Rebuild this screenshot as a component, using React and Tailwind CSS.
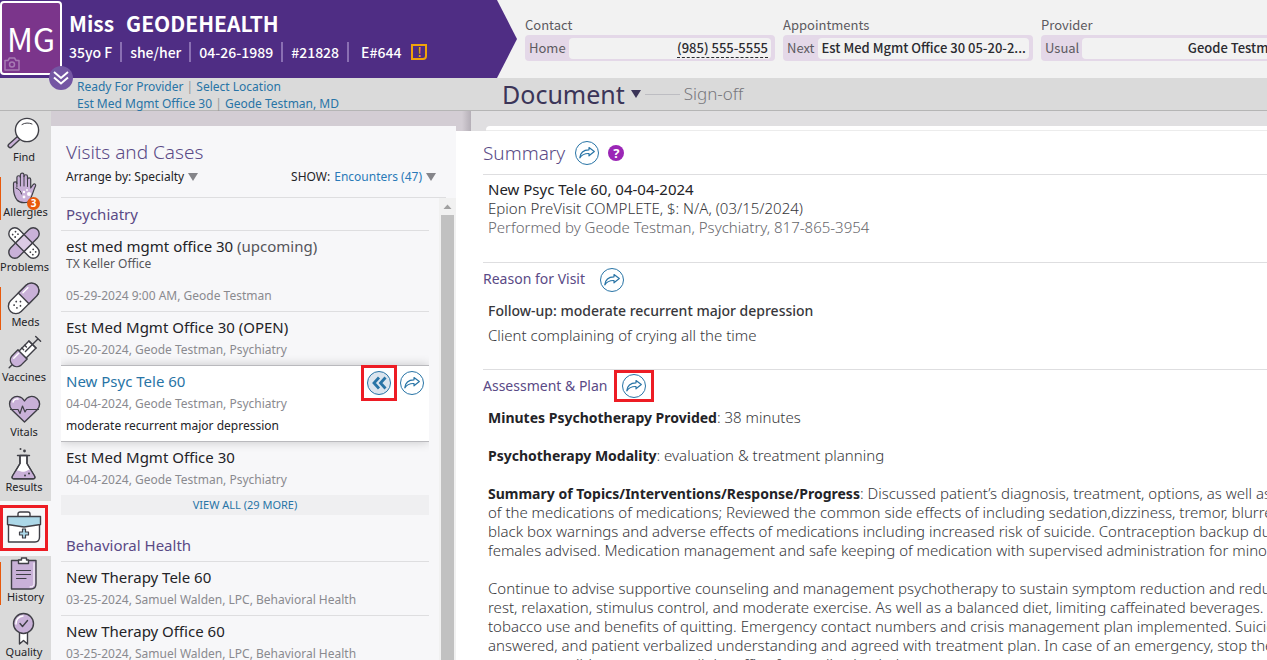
import React from 'react';

const stroke = { stroke: '#3f3f46', strokeWidth: 1.4, strokeLinejoin: 'round', strokeLinecap: 'round' };
const LILAC = '#c9b1d8';

const FindIcon = () => (
  <svg viewBox="0 0 48 34" className="w-12 h-[34px] overflow-visible" {...stroke}>
    <path d="M17.5 20.5 L8.8 28.2 a2 2 0 0 0 2.9 2.9 L20.3 23z" fill={LILAC} />
    <circle cx="27" cy="14" r="11.6" fill="#fff" />
    <path d="M22 8.5 C25 6.6 29 6.6 32 8" fill="none" strokeWidth="1" />
  </svg>
);

const AllergiesIcon = () => (
  <svg viewBox="0 0 48 34" className="w-12 h-[34px] overflow-visible" {...stroke}>
    <path
      d="M17 29 C14 25 13.500 22 13.500 17 V12.500 a1.700 1.700 0 0 1 3.400 0 V6.500 a1.700 1.700 0 0 1 3.500 0 V4 a1.800 1.800 0 0 1 3.600 0 V5.500 a1.700 1.700 0 0 1 3.500 0 V8.500 a1.600 1.600 0 0 1 3.200 0 V17 l2.500 -3.500 c1.500 -1.500 3 0 2.300 1.500 C33 20 32.500 25 29.500 29.500 C28 32.500 20 32.500 17 29z"
      fill={LILAC}
      strokeWidth="1.200"
    />
    <path d="M16.900 12 V16 M20.400 6 V15 M24 5 V15 M27.500 6 V15.500 M16 17 C19 18 21 20 21.500 23" fill="none" strokeWidth="1" />
    <g fill="#fff" stroke="none">
      <circle cx="24" cy="21" r="1.200" />
      <circle cx="29" cy="23" r="2" />
      <circle cx="24" cy="26" r="1.400" />
      <circle cx="27" cy="19" r=".9" />
    </g>
  </svg>
);

const ProblemsIcon = () => (
  <svg viewBox="0 0 48 34" className="w-12 h-[34px] overflow-visible" {...stroke}>
    <g transform="rotate(45 24 17)">
      <rect x="5" y="11" width="38" height="12" rx="6" fill="#fff" />
      <g fill="#3f3f46" stroke="none">
        <circle cx="10" cy="15" r=".9" />
        <circle cx="13.500" cy="15" r=".9" />
        <circle cx="10" cy="19" r=".9" />
        <circle cx="13.500" cy="19" r=".9" />
        <circle cx="35" cy="15" r=".9" />
        <circle cx="38.500" cy="15" r=".9" />
        <circle cx="35" cy="19" r=".9" />
        <circle cx="38.500" cy="19" r=".9" />
      </g>
    </g>
    <g transform="rotate(-45 24 17)">
      <rect x="5" y="11" width="38" height="12" rx="6" fill={LILAC} />
      <rect x="18" y="11" width="12" height="12" fill="#dccbe5" />
    </g>
  </svg>
);

const MedsIcon = () => (
  <svg viewBox="0 0 48 34" className="w-12 h-[34px] overflow-visible" {...stroke}>
    <g transform="rotate(-45 24 17)">
      <rect x="5" y="9.500" width="37" height="15" rx="7.500" fill="#fff" />
      <path d="M23.500 9.500 H34.500 a7.500 7.500 0 0 1 0 15 H23.500z" fill={LILAC} />
      <path d="M27 12.500 H34" stroke="#fff" fill="none" />
      <g fill="#3f3f46" stroke="none">
        <circle cx="12" cy="15" r=".9" />
        <circle cx="16" cy="14" r=".9" />
        <circle cx="12" cy="19" r=".9" />
        <circle cx="16" cy="20" r=".9" />
        <circle cx="19" cy="17" r=".9" />
      </g>
    </g>
  </svg>
);

const VaccinesIcon = () => (
  <svg viewBox="0 0 48 34" className="w-12 h-[34px] overflow-visible" {...stroke}>
    <g transform="rotate(-45 24 17)">
      <path d="M3 17 H9" />
      <path d="M22 10.500 V23.500 H13 C9.500 23 7.500 20 7.500 17 C7.500 14 9.500 11 13 10.500z" fill={LILAC} />
      <rect x="22" y="12" width="14" height="10" fill="#fff" />
      <path d="M26 17 H44 M44 13.500 V20.500 M36 12 V22" fill="none" />
      <path d="M26 12 V14.500 M30 12 V14.500" fill="none" />
      <path d="M13 13.500 H20" stroke="#fff" fill="none" />
    </g>
  </svg>
);

const VitalsIcon = () => (
  <svg viewBox="0 0 48 34" className="w-12 h-[34px] overflow-visible" {...stroke}>
    <path
      d="M24.500 31 L12 19 C8.500 15.500 9 10 12 7.500 C16 4 21.500 5 24.500 10 C27.500 5 33 4 37 7.500 C40.500 10.500 40.500 15.500 37 19z"
      fill={LILAC}
    />
    <path d="M13 11 C13.500 8.500 16 7.500 18 8" stroke="#fff" fill="none" />
    <path d="M10.500 18.500 H18 L20 22.500 L22.500 15 L25 21 L26.500 18.500 H38.500" fill="none" strokeWidth="1.200" />
  </svg>
);

const ResultsIcon = () => (
  <svg viewBox="0 0 48 34" className="w-12 h-[34px] overflow-visible" {...stroke}>
    <path d="M20 9.500 V17.500 L12.500 30 C11.500 32 12.500 32.800 14 32.800 H33 C34.500 32.800 35.500 32 34.500 30 L27 17.500 V9.500z" fill="#fff" />
    <path d="M15.500 25 C19 23 21.500 27 25 25.500 C27.500 24.500 29 23 30.500 23.500 L34.300 30 C35 31.500 34 32.500 33 32.500 H14 C12.500 32.500 12 31.500 12.700 30z" fill={LILAC} stroke="none" />
    <path d="M20 9.500 V17.500 L12.500 30 C11.500 32 12.500 32.800 14 32.800 H33 C34.500 32.800 35.500 32 34.500 30 L27 17.500 V9.500 M17.500 9.500 H29.500" fill="none" />
    <g fill="#3f3f46" stroke="none">
      <circle cx="20.500" cy="3" r="1" />
      <circle cx="24.500" cy="5" r="1.400" />
      <circle cx="25" cy="29.500" r="1" />
      <circle cx="29" cy="27.500" r="1" />
    </g>
  </svg>
);

const BriefcaseIcon = () => (
  <svg viewBox="0 0 36 34" className="w-9 h-[34px] overflow-visible" {...stroke}>
    <path d="M12 5.500 V3 a2 2 0 0 1 2 -2 H22 a2 2 0 0 1 2 2 V5.500" fill="#fff" />
    <path d="M2.500 13 V31 H29 C32 31 33.500 29 33.500 26 V13" fill="#fff" />
    <path d="M1.500 5.500 H34.500 V13.500 L18 16 L1.500 13.500z" fill="#acd8e8" />
    <path d="M16.500 18 h3 v3 h3 v3 h-3 v3 h-3 v-3 h-3 v-3 h3z" fill="#acd8e8" strokeWidth="1.200" />
  </svg>
);

const HistoryIcon = () => (
  <svg viewBox="0 0 48 34" className="w-12 h-[34px] overflow-visible" {...stroke}>
    <path d="M11.500 4.500 H36 V27.500 C36 31 34 33 31 33 H11.500z" fill={LILAC} />
    <path d="M34 7 V27 C34 29.500 33 31 30 31" stroke="#fff" fill="none" strokeWidth="1" />
    <path d="M18.500 7.500 V4 H21.500 V2 H26.500 V4 H28.500 V7.500z" fill="#fff" />
    <path d="M16.500 14.500 H30.500 M16.500 18.500 H30.500 M16.500 22.500 H26" fill="none" strokeWidth="1.200" />
  </svg>
);

const QualityIcon = () => (
  <svg viewBox="0 0 48 34" className="w-12 h-[34px] overflow-visible" {...stroke}>
    <path d="M19.500 21 V33 L23.500 29.500 L27.500 33 V21" fill="#fff" />
    <circle cx="23.500" cy="12.500" r="10" fill={LILAC} />
    <path d="M16 13 a7.500 7.500 0 0 1 7 -8" stroke="#fff" fill="none" />
    <path d="M20 12.500 L22.500 15.500 L27.500 9.500" fill="none" />
  </svg>
);

const NAV = [
  { label: 'Find', icon: FindIcon },
  { label: 'Allergies', icon: AllergiesIcon, alert: true, count: 3 },
  { label: 'Problems', icon: ProblemsIcon },
  { label: 'Meds', icon: MedsIcon, alert: true },
  { label: 'Vaccines', icon: VaccinesIcon },
  { label: 'Vitals', icon: VitalsIcon },
  { label: 'Results', icon: ResultsIcon },
  { label: 'Visits', icon: BriefcaseIcon, active: true },
  { label: 'History', icon: HistoryIcon, alert: true },
  { label: 'Quality', icon: QualityIcon },
];

const NavItem = ({ item }) => {
  const Icon = item.icon;
  if (item.active) {
    return (
      <div className="h-[55px] shrink-0 bg-[#f7f7f9] pt-1">
        <button aria-label={item.label} className="w-12 h-[46px] border-3 border-[#ed1c24] flex items-center justify-center">
          <Icon />
        </button>
      </div>
    );
  }
  return (
    <button className="relative h-[55px] shrink-0 bg-[#dadada] flex flex-col items-start">
      {item.alert && <span className="absolute left-0 top-1.5 w-px h-[43px] bg-[#e8590c]"></span>}
      <Icon />
      <span className={item.alert ? 'w-[51px] text-center text-[11px] leading-[14px]' : 'w-12 text-center text-[11px] leading-[14px]'}>
        {item.label}
      </span>
      {item.count && (
        <span className="absolute left-[27px] top-[26px] size-[13px] rounded-full bg-[#e8590c] text-white text-[10px] leading-[13px] font-bold text-center">
          {item.count}
        </span>
      )}
    </button>
  );
};

const ShareButton = () => (
  <button aria-label="Share" className="size-6 shrink-0 rounded-full border border-[#2874a6] bg-white flex items-center justify-center">
    <svg viewBox="0 0 16 14" className="w-4 h-3.5" fill="none" stroke="#2874a6" strokeWidth="1.200" strokeLinejoin="round">
      <path d="M10 1.500 L15.300 5.500 L10 9.800 V7.500 C6 7.300 3 8.500 .8 11.800 C1.300 6.500 4.500 3.900 10 3.800z" />
    </svg>
  </button>
);

const Caret = ({ className }) => (
  <svg viewBox="0 0 10 8" className={className} fill="currentColor">
    <path d="M0 0 H10 L5 8z" />
  </svg>
);

const InfoField = ({ title, label, children }) => (
  <div className="w-[250px] shrink-0">
    <div className="text-[13px] leading-5 text-[#5c5a60]">{title}</div>
    <div className="h-[26px] rounded bg-[#e4d8e8] flex items-center px-1 text-[13px] text-[#5c5a60]">
      <span className="shrink-0 pr-[3px]">{label}</span>
      <div className="flex-1 min-w-0 h-[21px] rounded bg-[#f2f2f2] px-[3px] text-right leading-5 font-medium text-[#2b2b30] whitespace-nowrap">
        {children}
      </div>
    </div>
  </div>
);

const Header = () => (
  <header className="relative z-10 h-[78px] shrink-0 flex bg-[#f2f2f2] font-['Noto_Sans_CJK_SC','Liberation_Sans',sans-serif]">
    <div className="w-[517px] shrink-0 bg-[#4f2d84] text-white flex [clip-path:polygon(0_0,497px_0,100%_50%,497px_100%,0_100%)]">
      <div className="relative mt-px w-[62px] h-[74px] rounded border-2 border-white bg-[#7b358b] flex items-center justify-center text-[32px]">
        MG
        <svg viewBox="0 0 16 14" className="absolute left-0.5 bottom-0.5 w-4 h-3.5" fill="none" stroke="#a77bb3" strokeWidth="1.500">
          <path d="M1 3.500 H4 L5.500 1 H10.500 L12 3.500 H15 V13 H1z" strokeLinejoin="round" />
          <circle cx="8" cy="7.500" r="2.500" />
        </svg>
      </div>
      <div className="pl-[7px] pt-2 whitespace-nowrap">
        <h1 className="flex gap-3 text-[21px] leading-[30px] font-bold">
          <span>Miss</span>
          <span>GEODEHEALTH</span>
        </h1>
        <div className="mt-1 flex items-center text-[14px] leading-5 font-medium">
          <span>35yo F</span>
          <span className="ml-2 pl-2 border-l-2 border-[#8a6fb3]">she/her</span>
          <span className="ml-2 pl-2 border-l-2 border-[#8a6fb3]">04-26-1989</span>
          <span className="ml-2 pl-2 border-l-2 border-[#8a6fb3]">#21828</span>
          <span className="ml-2 pl-3 border-l-2 border-[#8a6fb3]">E#644</span>
          <span className="ml-2.5 size-4 border-2 border-[#f0a30a] rounded-br text-[#f0a30a] text-[13px] leading-3 text-center">!</span>
        </div>
      </div>
    </div>
    <button aria-label="Expand patient" className="absolute left-[49px] top-[66px] size-6 rounded-full bg-[#7456a3] flex items-center justify-center">
      <svg viewBox="0 0 16 14" className="w-4 h-3.5" fill="none" stroke="#fff" strokeWidth="2">
        <path d="M1 1 L8 7 L15 1 M1 6.500 L8 12.500 L15 6.500" />
      </svg>
    </button>
    <div className="flex-1 min-w-0 overflow-hidden flex gap-2 pl-2 pt-[15px]">
      <InfoField title="Contact" label="Home">
        <a href="#phone" className="inline-block leading-[18px] border-b border-dashed border-[#2b2b30]">(985) 555-5555</a>
      </InfoField>
      <InfoField title="Appointments" label="Next">Est Med Mgmt Office 30 05-20-2...</InfoField>
      <InfoField title="Provider" label="Usual">Geode Testman</InfoField>
    </div>
  </header>
);

const WorkflowBar = () => (
  <div className="h-[33px] shrink-0 bg-[#dadada] border-b border-[#b5b5b5] flex">
    <div className="w-[502px] shrink-0 pl-[77px] text-[12px] leading-[17px] text-[#2874a6]">
      <div><a href="#ready">Ready For Provider</a> <span className="text-[#999]">|</span> <a href="#location">Select Location</a></div>
      <div><a href="#visit">Est Med Mgmt Office 30</a> <span className="text-[#999]">|</span> <a href="#provider">Geode Testman, MD</a></div>
    </div>
    <div className="flex items-center">
      <button className="flex items-center gap-1.5 text-[25px] leading-8 text-[#3b3558]">
        Document
        <Caret className="w-2.5 h-2" />
      </button>
      <span className="w-[35px] h-px mx-1 bg-[#bdbdc2]"></span>
      <button className="text-[17px] font-light text-[#77777c]">Sign-off</button>
    </div>
  </div>
);

const Encounter = ({ title, note, place, detail, last }) => (
  <div className={last ? 'px-[5px] pt-[5px] pb-1' : 'px-[5px] pt-[5px] pb-1 border-b border-[#dedee0]'}>
    <div className="text-[15px] leading-5 text-[#232327]">
      {title} {note && <span className="text-[#55555a]">{note}</span>}
    </div>
    {place && <div className="mb-3 text-[12px] leading-4 text-[#55555a]">{place}</div>}
    <div className="mt-px text-[12px] leading-[23px] text-[#8a8a8f]">{detail}</div>
  </div>
);

const VisitsPanel = () => (
  <section className="w-[405px] shrink-0 flex flex-col bg-[#d3cdd4] pt-[15px]">
    <div className="flex-1 min-h-0 bg-[#f7f7f9] flex flex-col pl-2.5">
      <div className="mr-2.5 px-[5px] h-[72px] shrink-0 border-b border-[#dedee0]">
        <h2 className="pt-3.5 text-[19px] leading-6 font-light text-[#5a4a86]">Visits and Cases</h2>
        <div className="flex justify-between text-[12px] leading-[26px]">
          <button className="flex items-center gap-1">
            Arrange by: Specialty <Caret className="w-2.5 h-2 text-[#85858a]" />
          </button>
          <button className="flex items-center gap-1 mr-[5px]">
            SHOW: <span className="text-[#2a7ab8]">Encounters (47)</span> <Caret className="w-2.5 h-2 text-[#85858a]" />
          </button>
        </div>
      </div>
      <div className="flex-1 min-h-0 flex">
        <div className="flex-1 min-w-0 mr-2.5 overflow-hidden">
          <h3 className="px-[5px] h-[33px] leading-8 text-[15px] text-[#5a4a86] border-b border-[#dedee0]">Psychiatry</h3>
          <Encounter title="est med mgmt office 30" note="(upcoming)" place="TX Keller Office" detail="05-29-2024 9:00 AM, Geode Testman" />
          <Encounter title="Est Med Mgmt Office 30 (OPEN)" detail="05-20-2024, Geode Testman, Psychiatry" last />
          <div className="relative h-[77px] flex justify-between bg-white border-y border-[#b9b9bd] px-[5px] shadow-[0_0_10px_rgba(0,0,0,0.2)]">
            <div>
              <div className="pt-[5px] text-[15px] leading-5 text-[#2874a6]">New Psyc Tele 60</div>
              <div className="mt-px text-[12px] leading-[23px] text-[#8a8a8f]">04-04-2024, Geode Testman, Psychiatry</div>
              <div className="text-[12px] leading-[21px] text-[#232327]">moderate recurrent major depression</div>
            </div>
            <div className="flex items-center gap-[3px] h-[34px]">
              <div className="border-3 border-[#ed1c24] p-[3px]">
                <button aria-label="Collapse" className="size-6 rounded-full border border-[#2874a6] bg-[#dbe5ee] flex items-center justify-center">
                  <svg viewBox="0 0 16 14" className="w-4 h-3.5" fill="none" stroke="#2874a6" strokeWidth="2.800">
                    <path d="M8 1.500 L3 7 L8 12.500 M14.500 1.500 L9.500 7 L14.500 12.500" />
                  </svg>
                </button>
              </div>
              <ShareButton />
            </div>
          </div>
          <Encounter title="Est Med Mgmt Office 30" detail="04-04-2024, Geode Testman, Psychiatry" last />
          <button className="block w-full h-5 bg-[#efeff1] text-[11px] text-[#2874a6]">VIEW ALL (29 MORE)</button>
          <h3 className="mt-3.5 px-[5px] h-[33px] leading-8 text-[15px] text-[#5a4a86] border-b border-[#dedee0]">Behavioral Health</h3>
          <Encounter title="New Therapy Tele 60" detail="03-25-2024, Samuel Walden, LPC, Behavioral Health" />
          <Encounter title="New Therapy Office 60" detail="03-25-2024, Samuel Walden, LPC, Behavioral Health" />
        </div>
        <div className="w-[17px] bg-[#f1f1f1] flex flex-col items-center">
          <svg viewBox="0 0 17 17" className="size-[17px]">
            <path d="M4.500 11 L8.500 6.500 L12.500 11z" fill="#a0a0a0" />
          </svg>
          <div className="w-[13px] flex-1 bg-[#c1c1c1]"></div>
        </div>
      </div>
    </div>
  </section>
);

const Topic = ({ children }) => <b className="text-[14px] font-bold text-[#232327]">{children}</b>;

const SummaryPanel = () => (
  <section className="flex-1 min-w-0 flex flex-col bg-white overflow-hidden">
    <div className="h-5 shrink-0 flex">
      <div className="w-[15px] bg-linear-to-r from-[#d3cdd4] from-40% to-[#b5afb7]"></div>
      <div className="flex-1 bg-[#e0dfe1] pt-[15px] pl-[15px]">
        <div className="h-[5px] bg-white border-b border-[#ececec] rounded-tl-sm"></div>
      </div>
    </div>
    <div className="flex-1 pl-[27px] text-[15px] leading-[19px] text-[#37373b] font-light whitespace-nowrap">
      <div className="h-11 flex items-center border-b border-[#dedee0]">
        <h2 className="text-[19px] leading-6 font-light text-[#5a4a86] mr-2.5">Summary</h2>
        <ShareButton />
        <button aria-label="Help" className="ml-[9px] size-4 rounded-full bg-[#9b26b6] text-white text-[13px] leading-4 font-bold">?</button>
      </div>
      <div className="h-[88px] pl-[5px] pt-[5px] border-b border-[#dedee0]">
        <div className="font-normal text-[#232327]">New Psyc Tele 60, 04-04-2024</div>
        <div>Epion PreVisit COMPLETE, $: N/A, (03/15/2024)</div>
        <div className="text-[#66666b]">Performed by Geode Testman, Psychiatry, 817-865-3954</div>
      </div>
      <div className="h-[107px] border-b border-[#dedee0]">
        <div className="h-[34px] flex items-start">
          <h3 className="mt-1.5 text-[14px] font-normal text-[#5a4a86] mr-[15px]">Reason for Visit</h3>
          <div className="pt-[5px]">
            <ShareButton />
          </div>
        </div>
        <div className="pl-[5px] leading-6">
          <div className="pt-0.5 text-[14px] font-medium text-[#37373b]">Follow-up: moderate recurrent major depression</div>
          <div>Client complaining of crying all the time</div>
        </div>
      </div>
      <div className="h-[38px] flex items-start">
        <h3 className="mt-1.5 text-[14px] font-normal text-[#5a4a86] mr-[7px]">Assessment &amp; Plan</h3>
        <div className="border-3 border-[#ed1c24] px-[5px] py-px">
          <ShareButton />
        </div>
      </div>
      <div className="pl-[5px]">
        <p className="mb-[19px]"><Topic>Minutes Psychotherapy Provided</Topic>: 38 minutes</p>
        <p className="mb-[19px]"><Topic>Psychotherapy Modality</Topic>: evaluation &amp; treatment planning</p>
        <p className="mb-[19px]">
          <Topic>Summary of Topics/Interventions/Response/Progress</Topic>: Discussed patient’s diagnosis, treatment, options, as well as<br />
          of the medications of medications; Reviewed the common side effects of including sedation,dizziness, tremor, blurred<br />
          black box warnings and adverse effects of medications including increased risk of suicide. Contraception backup due<br />
          females advised. Medication management and safe keeping of medication with supervised administration for minors.
        </p>
        <p>
          Continue to advise supportive counseling and management psychotherapy to sustain symptom reduction and reduce<br />
          rest, relaxation, stimulus control, and moderate exercise. As well as a balanced diet, limiting caffeinated beverages. Educated<br />
          tobacco use and benefits of quitting. Emergency contact numbers and crisis management plan implemented. Suicide<br />
          answered, and patient verbalized understanding and agreed with treatment plan. In case of an emergency, stop the<br />
          present possible symptoms, call the office for medication help
        </p>
      </div>
    </div>
  </section>
);

const App = () => (
  <div className="h-screen flex flex-col overflow-hidden bg-white text-[#232327] font-['Noto_Sans','Open_Sans',sans-serif]">
    <Header />
    <WorkflowBar />
    <div className="flex-1 min-h-0 flex">
      <nav className="w-[51px] shrink-0 flex flex-col overflow-hidden bg-[#dadada] pt-[5px]">
        {NAV.map((item) => (
          <NavItem key={item.label} item={item} />
        ))}
      </nav>
      <VisitsPanel />
      <SummaryPanel />
    </div>
  </div>
);

export default App;
